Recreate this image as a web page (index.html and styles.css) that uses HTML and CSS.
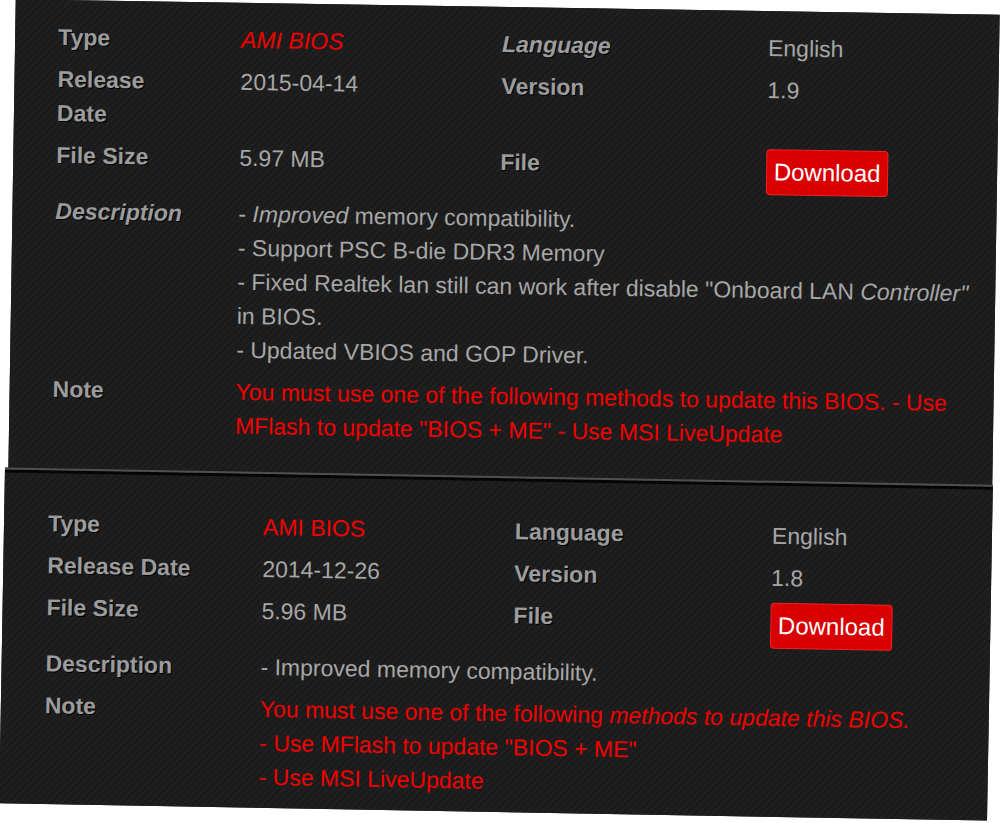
FILE: index.html
```html
<!DOCTYPE html>
<html lang="en">
<head>
  <meta charset="UTF-8">
  <title>BIOS</title>
  <link rel="stylesheet" href="styles.css">
</head>
<body>
  <!-- BIOS 1.9 -->
  <section class="release release-first">
    <div class="label lead">Type</div>
    <div class="value red"><i>AMI BIOS</i></div>
    <div class="label"><i>Language</i></div>
    <div class="value">English</div>

    <div class="label lead">Release Date</div>
    <div class="value">2015-04-14</div>
    <div class="label">Version</div>
    <div class="value">1.9</div>

    <div class="label lead">File Size</div>
    <div class="value">5.97 MB</div>
    <div class="label">File</div>
    <div class="value"><a class="download">Download</a></div>

    <div class="label lead"><i>Description</i></div>
    <div class="value wide">
      - <i>Improved</i> memory compatibility.<br>
      - Support PSC B-die DDR3 Memory<br>
      - Fixed Realtek lan still can work after disable "Onboard LAN <i>Controller"</i> in BIOS.<br>
      - Updated VBIOS and GOP Driver.
    </div>

    <div class="label lead">Note</div>
    <div class="value wide red">You must use one of the following methods to update this BIOS. - Use MFlash to update "BIOS + ME" - Use MSI LiveUpdate</div>
  </section>

  <!-- BIOS 1.8 -->
  <section class="release release-second">
    <div class="label lead">Type</div>
    <div class="value red">AMI BIOS</div>
    <div class="label">Language</div>
    <div class="value">English</div>

    <div class="label lead">Release Date</div>
    <div class="value">2014-12-26</div>
    <div class="label">Version</div>
    <div class="value">1.8</div>

    <div class="label lead">File Size</div>
    <div class="value">5.96 MB</div>
    <div class="label">File</div>
    <div class="value"><a class="download">Download</a></div>

    <div class="label lead">Description</div>
    <div class="value wide">- Improved memory compatibility.</div>

    <div class="label lead">Note</div>
    <div class="value wide red">
      You must use one of the following <i>methods to update this BIOS.</i><br>
      - Use MFlash to update "BIOS + ME"<br>
      - Use MSI LiveUpdate
    </div>
  </section>
</body>
</html>
```

FILE: styles.css
```css
body {
  margin: 0;
  height: 823px;
  overflow: hidden;
  background-color: #fff;
  font-family: "Liberation Sans", Arial, sans-serif;
}

.release {
  display: grid;
  box-sizing: border-box;
  background-color: #1c1c1c;
  background-image: repeating-linear-gradient(135deg, #1b1b1b 0 3px, #202020 3px 5px);
  color: #a6a6a6;
  font-size: 23px;
  line-height: 34px;
}

.release > div {
  padding: 4px 0;
}

/* panneau du haut, un peu penché */
.release-first {
  width: 984px;
  margin: 7px 0 0 12px;
  padding: 16px 8px 27px 43px;
  grid-template-columns: 183px 261px 266px 1fr;
  transform: rotate(0.9deg);
}

.release-first .lead {
  padding-right: 60px;
}

/* panneau du bas */
.release-second {
  width: 988px;
  margin: -2px 0 0 2px;
  padding: 32px 10px 10px 44px;
  border-top: 2px solid #505050;
  box-shadow: inset 0 3px 0 #050505;
  grid-template-columns: 215px 252px 257px 1fr;
  transform: rotate(1deg);
}

.label {
  font-weight: bold;
  color: #9c9c9c;
  text-shadow: 1px 1px 0 #000;
}

.wide {
  grid-column: 2 / -1;
}

.red {
  color: #f20000;
}

.download {
  display: block;
  box-sizing: border-box;
  width: 122px;
  height: 46px;
  margin-bottom: 2px;
  background-color: #d80000;
  border: 1px solid #f22222;
  border-radius: 4px;
  color: #fff;
  font-size: 24px;
  line-height: 44px;
  text-align: center;
}
```
